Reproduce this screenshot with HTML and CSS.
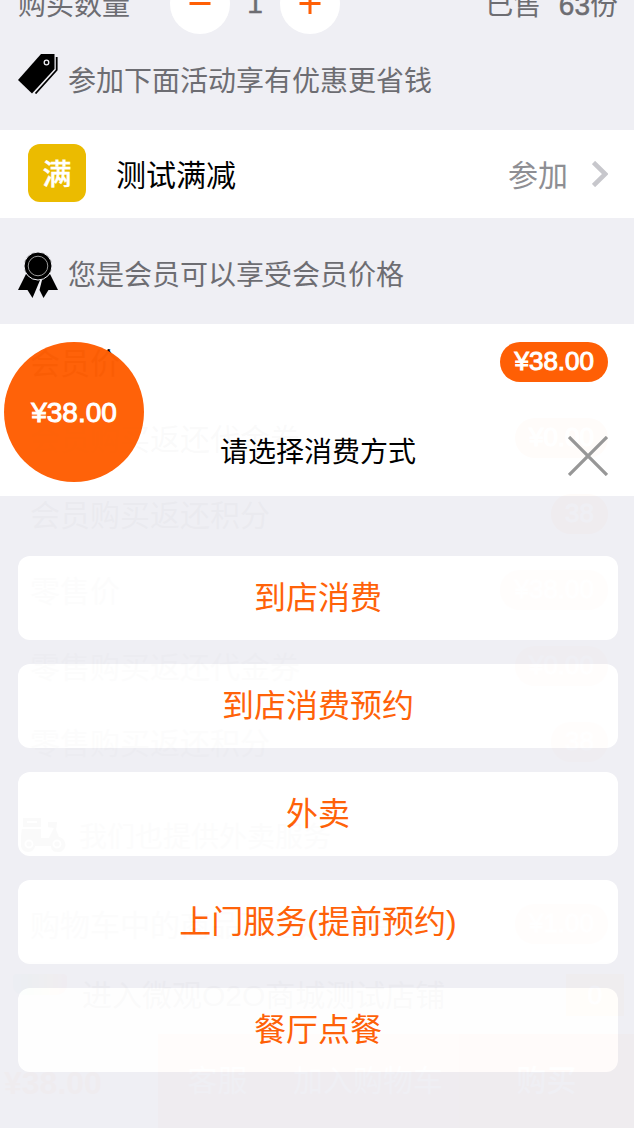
FILE: index.html
```html
<!DOCTYPE html>
<html lang="zh-CN">
<head>
<meta charset="utf-8">
<title>请选择消费方式</title>
<link rel="stylesheet" href="styles.css">
</head>
<body>
<div class="screen">
  <main class="page">
    <section class="quantity">
      <span>购买数量</span>
      <div class="stepper">
        <button class="step"><svg width="22" height="22" viewBox="0 0 22 22"><path d="M.5 10.500h21"/></svg></button>
        <span class="count">1</span>
        <button class="step"><svg width="22" height="22" viewBox="0 0 22 22"><path d="M.5 10.500h21M11 0v21"/></svg></button>
      </div>
      <span class="sold">已售&nbsp; <span class="sold-number">63</span>份</span>
    </section>
    <h2 class="section-title promo">
      <svg class="tag" width="40" height="40" viewBox="0 0 40 40"><path d="M23 0h13.500v15L14 39.500 0 26z"/><path d="M38.700 3v13L17.500 39.500" fill="none" stroke="#000" stroke-width="1.800"/><circle cx="28.500" cy="8.500" r="2.300" fill="none" stroke="#efeff4" stroke-width="1.300"/></svg>
      参加下面活动享有优惠更省钱
    </h2>
    <section class="offer">
      <span class="offer-badge">满</span><span>测试满减</span><span class="join">参加</span>
      <svg width="16" height="26" viewBox="0 0 16 26"><path d="M1.500 1.500 13.300 13 1.500 24.500" fill="none" stroke="#c7c7cc" stroke-width="4.600"/></svg>
    </section>
    <h2 class="section-title">
      <svg class="medal" width="40" height="47" viewBox="0 0 40 47"><path d="M8 22 0 38h9.500l5 8L22.500 27zM32 22l8 16h-9.500l-5 8-4-8L24.500 26z"/><circle cx="20" cy="14" r="14" stroke="#efeff4" stroke-width="1"/><circle cx="20" cy="14" r="9.800" fill="none" stroke="#999" stroke-width="1"/></svg>
      您是会员可以享受会员价格
    </h2>
    <section class="prices">
      <div class="row"><span>会员价</span><span class="pill">¥38.00</span></div>
      <div class="row"><span>会员购买返还代金券</span><span class="pill">¥0.00</span></div>
      <div class="row"><span>会员购买返还积分</span><span class="pill">38</span></div>
      <div class="row retail"><span>零售价</span><span class="pill">¥38.00</span></div>
      <div class="row retail"><span>零售购买返还代金券</span><span class="pill">¥0.00</span></div>
      <div class="row retail"><span>零售购买返还积分</span><span class="pill">38</span></div>
    </section>
    <h2 class="section-title delivery">
      <svg width="46" height="34" viewBox="0 0 46 34"><path d="M3 0h18v9H3zM2 11h19v9h8l5-10-6-1V4h9l-1 8 3 7c9 2 8 15-1 15-5 0-7-3-7-6H15c-1 8-14 8-14-1V18z"/><circle cx="9" cy="26" r="3.500" fill="none" stroke="#fff" stroke-width="2"/><circle cx="37" cy="26" r="3.500" fill="none" stroke="#fff" stroke-width="2"/><path d="M7 4h10" stroke="#fff" stroke-width="2"/></svg>
      我们也提供外卖服务
    </h2>
    <section class="prices">
      <div class="row retail"><span>购物车中的商品可返还代金券</span><span class="pill">¥1.00</span></div>
    </section>
    <section class="store">
      <span class="awning"></span><span>进入微观O2O商城测试店铺</span><span class="cart-count">0</span>
    </section>
    <footer class="toolbar">
      <b class="total">¥38.00</b><span class="service">客服</span><span class="add">加入购物车</span><span class="buy">购买</span>
    </footer>
  </main>
  <div class="sheet">
    <header class="sheet-head">
      <span>请选择消费方式</span>
      <svg class="close" width="40" height="40" viewBox="0 0 40 40"><path d="M1 1 39 39M39 1 1 39" stroke="#979797" stroke-width="3.300"/></svg>
    </header>
    <div class="options">
      <button class="option">到店消费</button>
      <button class="option">到店消费预约</button>
      <button class="option">外卖</button>
      <button class="option">上门服务(提前预约)</button>
      <button class="option">餐厅点餐</button>
    </div>
    <span class="price-disc">¥38.00</span>
  </div>
</div>
</body>
</html>
```
FILE: styles.css
```css
* { box-sizing: border-box; }
body { margin: 0; background: #efeff4; font-family: "Liberation Sans", "Noto Sans CJK SC", sans-serif; }
button { border: 0; padding: 0; font: inherit; background: #fff; }
svg { display: block; flex: none; }
.screen { position: relative; width: 634px; height: 1128px; overflow: hidden; }
.page { display: flex; flex-direction: column; font-size: 30px; color: #000; }
.quantity { display: flex; align-items: center; height: 60px; margin-top: -26px; padding: 0 16px 0 18px; font-size: 28px; line-height: 36px; color: #6d6d72; flex: none; }
.quantity > span { padding-top: 3px; }
.stepper { display: flex; align-items: center; margin-left: 40px; }
.step { display: flex; align-items: center; justify-content: center; width: 60px; height: 60px; border-radius: 50%; }
.step path { stroke: #ff5f05; stroke-width: 3; }
.count { width: 50px; text-align: center; -webkit-text-stroke: .5px; }
.sold { margin-left: auto; word-spacing: 1px; }
.sold-number { -webkit-text-stroke: .5px; }
.section-title { display: flex; align-items: center; gap: 10px; height: 106px; margin: 0; padding: 4px 18px 0; font-size: 28px; font-weight: 400; color: #6d6d72; }
.promo { height: 96px; padding: 0 18px 6px; }
.tag { margin-top: -10px; }
.medal { margin-top: 4px; }
.offer { display: flex; align-items: center; height: 88px; padding: 0 26px 2px 28px; background: #fff; }
.offer > svg { margin-top: 2px; }
.offer-badge { display: flex; align-items: center; justify-content: center; width: 58px; height: 58px; margin-right: 30px; padding-bottom: 2px; border-radius: 12px; background: #ebbb00; color: #fff; font-size: 29px; font-weight: 500; -webkit-text-stroke: .4px; }
.join { margin: 0 24px 0 auto; color: #8e8e93; }
.prices { background: #fff; }
.row { display: flex; align-items: center; justify-content: space-between; height: 76px; padding: 0 26px 0 30px; }
.row > span:first-child { padding-bottom: 2px; }
.pill { height: 40px; padding: 0 14px; border-radius: 20px; background: #ff5f05; color: #fff; font-size: 26px; line-height: 38px; -webkit-text-stroke: 1px; }
.retail { color: #777; }
.retail .pill { background: #ffa878; }
.delivery { gap: 13px; padding-left: 20px; background: #fff; }
.store { display: flex; align-items: center; height: 72px; padding: 0 10px 10px 13px; }
.awning { width: 54px; height: 21px; margin: -18px 15px 0 0; border-radius: 4px 4px 10px 10px; background: linear-gradient(90deg, #5bc8f5, #83d37c, #ffd34d, #ff6868); }
.cart-count { display: flex; align-items: center; justify-content: center; width: 58px; height: 42px; margin: 4px 0 0 auto; background: #ff9c00; color: #fff; font-size: 26px; -webkit-text-stroke: 1px; }
.toolbar { display: grid; grid-template-columns: 158px 119px 182px 175px; height: 94px; align-items: stretch; text-align: center; line-height: 94px; color: #fff; }
.total { padding-left: 4px; text-align: left; font-size: 32px; line-height: 98px; color: #ff5f05; }
.service { background: #ff7d40; }
.add { background: #ff7040; }
.buy { background: #ff5f05; font-weight: 500; }
.sheet { position: absolute; top: 412px; left: 0; width: 634px; height: 716px; }
.sheet-head { display: flex; align-items: center; justify-content: center; height: 84px; padding: 0 0 9px 2px; background: rgba(255, 255, 255, .98); font-size: 28px; }
.close { position: absolute; top: 24px; right: 26px; }
.price-disc { position: absolute; top: -70px; left: 4px; width: 140px; height: 140px; border-radius: 50%; background: #ff5f05; color: #fff; text-align: center; font-size: 28px; line-height: 142px; opacity: .98; -webkit-text-stroke: 1px; }
.options { display: flex; flex-direction: column; gap: 24px; height: 632px; padding: 60px 16px 0 18px; background: #efeff4; opacity: .98; }
.option { height: 84px; border-radius: 12px; color: #ff5f05; font-size: 32px; padding-bottom: 6px; flex: none; }
```
